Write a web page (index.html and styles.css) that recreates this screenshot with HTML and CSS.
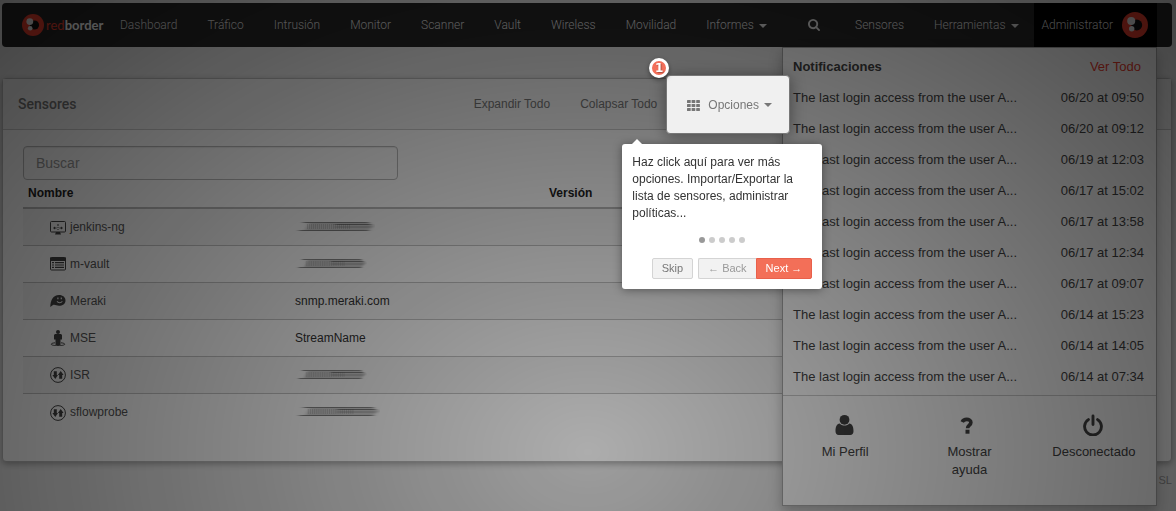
FILE: index.html
```html
<!DOCTYPE html>
<html lang="es">
<head>
<meta charset="utf-8">
<title>redborder - Sensores</title>
<link rel="stylesheet" href="styles.css">
</head>
<body>
<svg class="defs" aria-hidden="true">
  <defs>
    <symbol id="logo" viewBox="0 0 22 22">
      <circle cx="11" cy="11" r="11" fill="#f0402f"/>
      <circle cx="12.500" cy="11" r="4.600" fill="#111"/>
      <circle cx="7.800" cy="7.600" r="3.400" fill="#eee"/>
      <circle cx="8.200" cy="14.200" r="2.300" fill="#eee"/>
    </symbol>
    <symbol id="updown" viewBox="0 0 16 16">
      <circle cx="8" cy="8" r="7.400" fill="none" stroke="currentColor"/>
      <path fill="currentColor" d="M3.800 4.200h3V8h1.200L5.300 12 2.400 8H3.800zM9.200 11.800h3V8h1.400L10.700 4 7.900 8H9.200z"/>
    </symbol>
    <filter id="soft" x="-10%" y="-50%" width="120%" height="200%"><feGaussianBlur stdDeviation="2 0.3"/></filter>
    <symbol id="smear" viewBox="0 0 80 12" preserveAspectRatio="none">
      <g filter="url(#soft)">
        <path d="M14 2Q45 1 74 2L79 5 74 9Q40 10 10 9.500z" fill="#888" opacity=".4"/>
        <path d="M8 1.500H74M40 3.500H76M4 9.500H74" fill="none" stroke="#555" stroke-width="1" opacity=".7"/>
        <path d="M40 6H76" fill="none" stroke="#555" stroke-width="1" opacity=".4"/>
      </g>
      <path d="M12 5.500H56" fill="none" stroke="#555" stroke-width="5" stroke-dasharray="1 1" opacity=".2"/>
    </symbol>
  </defs>
</svg>

<div class="page">
  <nav class="navbar">
    <a class="brand" href="#"><svg class="brand-mark"><use href="#logo"/></svg><span class="brand-name"><span class="brand-red">red</span>border</span></a>
    <a class="nav-link" href="#">Dashboard</a>
    <a class="nav-link" href="#">Tráfico</a>
    <a class="nav-link" href="#">Intrusión</a>
    <a class="nav-link" href="#">Monitor</a>
    <a class="nav-link" href="#">Scanner</a>
    <a class="nav-link" href="#">Vault</a>
    <a class="nav-link" href="#">Wireless</a>
    <a class="nav-link" href="#">Movilidad</a>
    <a class="nav-link" href="#">Informes<span class="caret"></span></a>
    <div class="nav-right">
      <a class="nav-link nav-search" href="#" aria-label="Buscar">
        <svg class="search-icon" viewBox="64 128 1664 1664"><path fill="currentColor" d="M1216 832q0-185-131.500-316.500t-316.500-131.500-316.500 131.500-131.500 316.500 131.500 316.500 316.500 131.500 316.500-131.500 131.500-316.500zm512 832q0 52-38 90t-90 38q-54 0-90-38l-343-342q-179 124-399 124-143 0-273.500-55.500t-225-150-150-225-55.500-273.500 55.500-273.500 150-225 225-150 273.500-55.500 273.500 55.500 225 150 150 225 55.500 273.500q0 220-124 399l343 343q37 37 37 90z"/></svg>
      </a>
      <a class="nav-link" href="#">Sensores</a>
      <a class="nav-link" href="#">Herramientas<span class="caret"></span></a>
      <div class="account">
        <a class="account-link" href="#">Administrator<svg class="avatar"><use href="#logo"/></svg></a>
        <section class="menu">
          <header class="menu-head"><strong>Notificaciones</strong><a class="see-all" href="#">Ver Todo</a></header>
          <ul class="notices">
            <li><span>The last login access from the user A...</span><time>06/20 at 09:50</time></li>
            <li><span>The last login access from the user A...</span><time>06/20 at 09:12</time></li>
            <li><span>The last login access from the user A...</span><time>06/19 at 12:03</time></li>
            <li><span>The last login access from the user A...</span><time>06/17 at 15:02</time></li>
            <li><span>The last login access from the user A...</span><time>06/17 at 13:58</time></li>
            <li><span>The last login access from the user A...</span><time>06/17 at 12:34</time></li>
            <li><span>The last login access from the user A...</span><time>06/17 at 09:07</time></li>
            <li><span>The last login access from the user A...</span><time>06/14 at 15:23</time></li>
            <li><span>The last login access from the user A...</span><time>06/14 at 14:05</time></li>
            <li><span>The last login access from the user A...</span><time>06/14 at 07:34</time></li>
          </ul>
          <div class="menu-actions">
            <a href="#"><svg viewBox="0 0 22 22"><circle cx="10.500" cy="5.800" r="4.900" fill="currentColor"/><path fill="currentColor" d="M5.800 9.500C2.500 10 1.500 13 1.500 17.200 1.500 19.500 2.800 21 4.700 21H16.300C18.200 21 19.500 19.500 19.500 17.200 19.500 13 18.500 10 15.200 9.500 14 10.900 12.500 11.600 10.500 11.600S7 10.900 5.800 9.500z"/></svg>Mi Perfil</a>
            <a href="#"><svg viewBox="0 0 22 22"><path fill="none" stroke="currentColor" stroke-width="3.600" d="M4.200 8C5.200 5.800 6.800 5.400 8.700 5.400 11 5.400 12.900 6.500 12.900 8.400 12.900 11.100 9.600 11 9.600 14.200"/><path fill="currentColor" d="M7.500 15.700h4v4h-4z"/></svg>Mostrar<br>ayuda</a>
            <a href="#"><svg viewBox="0 0 22 22"><path fill="none" stroke="currentColor" stroke-width="2.900" stroke-linecap="round" d="M5.400 5.600A8.400 8.400 0 1 0 14.600 5.600M10 2V10.500"/></svg>Desconectado</a>
          </div>
        </section>
      </div>
    </div>
  </nav>

  <main class="panel">
    <header class="panel-head">
      <h1>Sensores</h1>
      <div class="tools">
        <a href="#">Expandir Todo</a>
        <a href="#">Colapsar Todo</a>
        <div class="spot">
          <button class="options" type="button"><svg class="grid-icon" viewBox="0 0 13 11" fill="currentColor"><rect width="3.700" height="3" rx=".6"/><rect x="4.600" width="3.700" height="3" rx=".6"/><rect x="9.200" width="3.700" height="3" rx=".6"/><rect y="4" width="3.700" height="3" rx=".6"/><rect x="4.600" y="4" width="3.700" height="3" rx=".6"/><rect x="9.200" y="4" width="3.700" height="3" rx=".6"/><rect y="8" width="3.700" height="3" rx=".6"/><rect x="4.600" y="8" width="3.700" height="3" rx=".6"/><rect x="9.200" y="8" width="3.700" height="3" rx=".6"/></svg>Opciones<span class="caret"></span></button>
          <span class="step">1</span>
          <div class="tour" role="dialog" aria-label="Opciones">
            <p>Haz click aquí para ver más opciones. Importar/Exportar la lista de sensores, administrar políticas...</p>
            <div class="dots"><i class="on"></i><i></i><i></i><i></i><i></i></div>
            <div class="tour-buttons"><button class="btn skip" type="button">Skip</button><button class="btn back" type="button">← Back</button><button class="btn next" type="button">Next →</button></div>
          </div>
        </div>
      </div>
    </header>
    <div class="panel-body">
      <input class="search" type="text" placeholder="Buscar" aria-label="Buscar">
      <table class="sensors">
        <colgroup><col class="col-name"><col class="col-host"><col></colgroup>
        <thead><tr><th>Nombre</th><th></th><th>Versión</th></tr></thead>
        <tbody>
          <tr><td class="name"><svg viewBox="0 0 16 16"><rect x=".5" y="1.500" width="15" height="10.500" rx="1" fill="none" stroke="currentColor"/><path fill="currentColor" d="M7.500 4h1v2h-1zM7.500 7h1v1h-1zM3 8l2-1.500v3zM13 8l-2-1.500v3zM5 7.500h1.500v1H5zM9.500 7.500H11v1H9.500zM7.500 9h1v1h-1zM6 12h4l1 2.500H5z"/></svg>jenkins-ng</td><td><svg class="smear"><use href="#smear"/></svg></td><td></td></tr>
          <tr><td class="name"><svg viewBox="0 0 16 16"><rect x=".5" y="1.500" width="15" height="12.500" rx="1" fill="none" stroke="currentColor"/><path fill="currentColor" d="M0 1.500h16V5H0zM2 6h2v1.200H2zM5 6h9v1.200H5zM2 8.400h2v1.200H2zM5 8.400h9v1.200H5zM2 10.800h2V12H2zM5 10.800h9V12H5z"/></svg>m-vault</td><td><svg class="smear short"><use href="#smear"/></svg></td><td></td></tr>
          <tr><td class="name"><svg viewBox="0 0 16 16"><path fill="currentColor" fill-rule="evenodd" d="M.3 14C.5 7 3 2 9 2c4 0 6.500 2.500 6.500 5.400 0 3.300-3 5.300-6.500 5.300-2.500 0-4.500-1.500-6-.7zM7.300 4.500v1.800h1.200V4.500zM10.700 4.500v1.800h1.200V4.500zM6.600 8c1 3 5 3 6.100 0l-1 .3c-1 1.200-3 1.200-4 0z"/></svg>Meraki</td><td>snmp.meraki.com</td><td></td></tr>
          <tr><td class="name"><svg viewBox="0 0 16 16"><circle cx="8" cy="2" r="2" fill="currentColor"/><path fill="currentColor" d="M5 4h6l1 1v4.500h-1.500V15h-5V9.500H4V5z"/><path fill="none" stroke="currentColor" d="M5 12.800C2.500 13 1.300 13.600 1.300 14.200c0 1 3 1.400 6.700 1.400s6.700-.4 6.700-1.400c0-.6-1.200-1.200-3.700-1.400"/></svg>MSE</td><td>StreamName</td><td></td></tr>
          <tr><td class="name"><svg><use href="#updown"/></svg>ISR</td><td><svg class="smear short"><use href="#smear"/></svg></td><td></td></tr>
          <tr><td class="name"><svg><use href="#updown"/></svg>sflowprobe</td><td><svg class="smear long"><use href="#smear"/></svg></td><td></td></tr>
        </tbody>
      </table>
    </div>
  </main>
  <footer class="footer">SL</footer>
</div>
<div class="shade"></div>
</body>
</html>
```
FILE: styles.css
```css
* { box-sizing: border-box; }
html { background: #e9e9e9; }
body {
  min-height: 100vh;
  margin: 0;
  color: #333;
  font: 12px/18px "Liberation Sans", Arial, sans-serif;
}
a { color: inherit; text-decoration: none; }
button { font: inherit; cursor: pointer; }
.defs { position: absolute; width: 0; height: 0; }
.page { padding: 3px 4px 0 2px; }

.navbar {
  display: flex;
  align-items: stretch;
  height: 44px;
  padding: 0 15px 0 20px;
  border-radius: 4px;
  background: #282828;
  color: #ddd;
  font: 300 12px/44px Roboto, sans-serif;
}
.brand { display: flex; align-items: center; gap: 2px; width: 83px; color: #fff; }
.brand-mark { width: 22px; height: 22px; flex: none; }
.brand-name { font: 700 13px/20px Lato, sans-serif; }
.brand-red { color: #f0402f; font-weight: 400; }
.nav-link { padding: 0 15px; white-space: nowrap; }
.caret {
  display: inline-block;
  margin-left: 5px;
  border: 4px solid transparent;
  border-top-color: currentColor;
  border-bottom: 0;
  vertical-align: middle;
}
.nav-right { display: flex; margin-left: auto; }
.nav-search { padding-right: 20px; display: flex; align-items: center; }
.search-icon { width: 12px; height: 12px; }
.account { position: relative; background: #000; }
.account-link { display: flex; align-items: center; gap: 9px; padding: 0 9px 0 8px; }
.avatar { width: 26px; height: 26px; }

.menu {
  position: absolute;
  z-index: 10;
  top: 44px;
  right: 0;
  width: 375px;
  padding-bottom: 26px;
  border: 1px solid #aaa;
  background: #fff;
  box-shadow: 0 6px 12px rgba(0, 0, 0, .25);
  color: #444;
  font: 13px/31px "Liberation Sans", Arial, sans-serif;
}
.menu-head { display: flex; justify-content: space-between; padding: 3px 15px 0 10px; }
.see-all { color: #f0402f; }
.notices { margin: 0; padding: 0 12px 3px 10px; border-bottom: 1px solid #ccc; list-style: none; }
.notices li { display: flex; justify-content: space-between; }
.menu-actions {
  display: grid;
  grid-template-columns: repeat(3, 1fr);
  padding-top: 18px;
  line-height: 18px;
  text-align: center;
}
.menu-actions svg { display: block; width: 22px; height: 22px; margin: 0 auto 7px; }

.panel {
  margin-top: 31px;
  border: 1px solid #bbb;
  border-radius: 4px;
  background: #fff;
  box-shadow: 0 2px 6px rgba(0, 0, 0, .3);
}
.panel-head {
  display: flex;
  align-items: center;
  justify-content: space-between;
  height: 51px;
  padding: 0 381px 0 15px;
  border-bottom: 1px solid #ccc;
  background: #f4f4f4;
  color: #777;
}
.panel-head h1 { margin: 0; font: 500 14px/20px Roboto, sans-serif; }
.tools { display: flex; align-items: center; gap: 30px; }
.spot { position: relative; z-index: 30; margin: 0 0 0 -21px; }
.options {
  display: flex;
  align-items: center;
  height: 59px;
  padding: 2px 17px 0 20px;
  border: 1px solid #777;
  border-radius: 4px;
  background: #f0f0f0;
  box-shadow: 0 2px 15px rgba(0, 0, 0, .4);
  color: #777;
}
.grid-icon { width: 13px; height: 11px; margin-right: 8px; }
.step {
  position: absolute;
  top: -17px;
  left: -17px;
  width: 20px;
  height: 20px;
  border: 3px solid #fff;
  border-radius: 50%;
  background: #f26f5a;
  box-shadow: 0 2px 5px rgba(0, 0, 0, .4);
  color: #fff;
  font: bold 12px/14px "DejaVu Sans", sans-serif;
  text-align: center;
  text-shadow: 1px 1px 1px rgba(0, 0, 0, .3);
}
.tour {
  position: absolute;
  top: 69px;
  left: -44px;
  width: 200px;
  padding: 10px;
  border-radius: 3px;
  background: #fff;
  box-shadow: 0 1px 10px rgba(0, 0, 0, .4);
  color: #333;
}
.tour::before {
  content: "";
  position: absolute;
  top: -5px;
  left: 10px;
  border: 5px solid transparent;
  border-top: 0;
  border-bottom-color: #fff;
}
.tour p { margin: 0; line-height: 17px; }
.dots { display: flex; justify-content: center; gap: 4px; padding: 15px 0; }
.dots i { width: 6px; height: 6px; border-radius: 50%; background: #ccc; }
.dots .on { background: #999; }
.tour-buttons { display: flex; justify-content: flex-end; }
.btn {
  height: 21px;
  padding: 0 9px;
  border: 1px solid #d4d4d4;
  border-radius: 2px;
  background: #f2f2f2;
  color: #777;
  font-size: 11px;
  line-height: 19px;
  white-space: nowrap;
}
.skip { margin-right: 5px; }
.back { border-right: 0; border-radius: 2px 0 0 2px; color: #999; }
.next { border-color: #e8604b; border-radius: 0 2px 2px 0; background: #f36f58; color: #fff; }

.panel-body { padding: 16px 20px 31px; }
.search {
  display: block;
  width: 375px;
  height: 34px;
  padding: 0 12px;
  border: 1px solid #bbb;
  border-radius: 4px;
  background: #fff;
  box-shadow: inset 0 1px 1px rgba(0, 0, 0, .08);
  font: 14px/20px "Liberation Sans", Arial, sans-serif;
}
.search::placeholder { color: #999; }
.sensors { width: 100%; border-collapse: collapse; table-layout: fixed; }
.col-name { width: 267px; }
.col-host { width: 254px; }
.sensors th { height: 28px; padding: 0 5px 1px; border-bottom: 2px solid #bbb; color: #222; text-align: left; }
.sensors td { height: 37px; padding: 0 5px; border-top: 1px solid #c4c4c4; color: #333; }
.sensors tbody tr:first-child td { border-top: 0; }
.sensors tbody tr:nth-child(odd) { background: #f7f7f7; }
.sensors .name { padding-left: 27px; color: #555; }
.name svg { width: 16px; height: 16px; margin-right: 4px; vertical-align: middle; color: #444; }
.smear { display: block; width: 80px; height: 12px; }
.smear.short { width: 72px; }
.smear.long { width: 85px; }
.footer { margin-top: 9px; color: #999; font-size: 11px; text-align: right; }

.shade {
  position: fixed;
  z-index: 20;
  inset: 0;
  background: radial-gradient(ellipse 71% 640px at 50% 452px, rgba(0, 0, 0, .32), rgba(0, 0, 0, .71));
  pointer-events: none;
}
```
